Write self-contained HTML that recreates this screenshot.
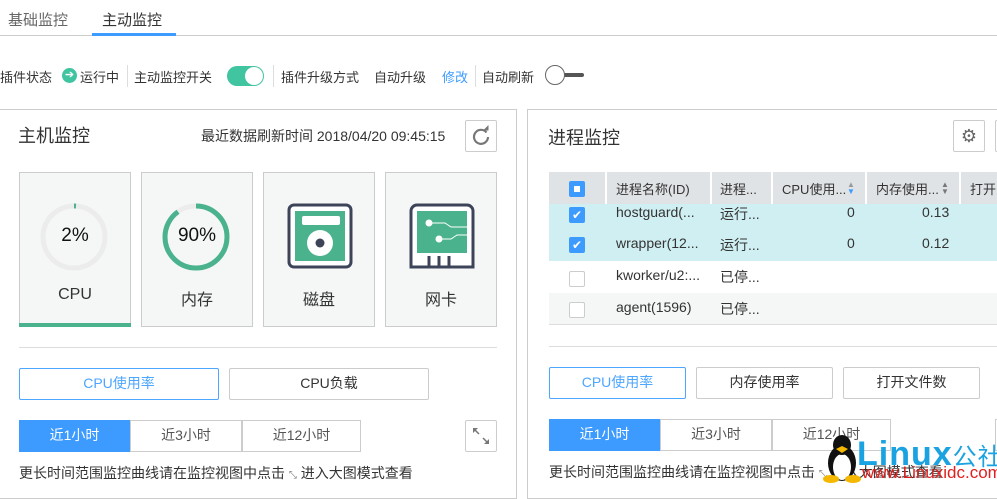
<!DOCTYPE html>
<html><head><meta charset="utf-8"><style>
*{box-sizing:border-box;margin:0;padding:0}
body{width:997px;height:483px;overflow:hidden;background:#fff;font-family:"Liberation Sans","Noto Sans CJK SC",sans-serif;color:#333;font-size:14px;position:relative}
.a{position:absolute;white-space:nowrap}
.card{position:absolute;top:172px;width:112px;height:155px;background:#f5f7f7;border:1px solid #ccc}
.card .l{position:absolute;width:100%;text-align:center;top:113px;font-size:16px;color:#333}
.btn{position:absolute;border:1px solid #ccc;border-radius:2px;text-align:center;line-height:29px;font-size:14px;color:#333;background:#fff}
.btn.sel{border-color:#4da6ff;color:#4da6ff}
.tt{position:absolute;border:1px solid #ccc;text-align:center;line-height:29px;font-size:14px;color:#555;background:#fff}
.tt.on{background:#3d9bff;border-color:#3d9bff;color:#fff}
.cb{position:absolute;left:20px;width:16px;height:16px;border:1px solid #ccc;border-radius:2px;background:#fff}
.cb.on{background:#3d9bff;border-color:#3d9bff}
.row{position:absolute;left:549px;width:448px;height:32px;font-size:14px;color:#333}
.row span{position:absolute;top:6px}
</style></head><body>
<div class="a" style="left:8px;top:9px;font-size:15px;color:#666">基础监控</div>
<div class="a" style="left:102px;top:9px;font-size:15px;color:#333">主动监控</div>
<div class="a" style="left:0;top:35px;width:997px;height:1px;background:#ccc"></div>
<div class="a" style="left:92px;top:33px;width:84px;height:3px;background:#3d9bff"></div>

<div class="a" style="left:0;top:67px;font-size:13px">插件状态</div>
<div class="a" style="left:62px;top:68px;width:15px;height:15px;border-radius:50%;background:#41c4a0;color:#fff;font-size:11px;line-height:15px;text-align:center">➔</div>
<div class="a" style="left:80px;top:67px;font-size:13px">运行中</div>
<div class="a" style="left:127px;top:65px;width:1px;height:22px;background:#ddd"></div>
<div class="a" style="left:134px;top:67px;font-size:13px">主动监控开关</div>
<div class="a" style="left:227px;top:66px;width:37px;height:20px;border-radius:10px;background:#41c4a0"></div>
<div class="a" style="left:245px;top:67px;width:18px;height:18px;border-radius:50%;background:#fff"></div>
<div class="a" style="left:273px;top:65px;width:1px;height:22px;background:#ddd"></div>
<div class="a" style="left:281px;top:67px;font-size:13px">插件升级方式</div>
<div class="a" style="left:374px;top:67px;font-size:13px">自动升级</div>
<div class="a" style="left:442px;top:67px;font-size:13px;color:#3d9bff">修改</div>
<div class="a" style="left:475px;top:65px;width:1px;height:22px;background:#ddd"></div>
<div class="a" style="left:482px;top:67px;font-size:13px">自动刷新</div>
<div class="a" style="left:560px;top:73px;width:24px;height:4px;background:#555;border-radius:2px"></div>
<div class="a" style="left:545px;top:65px;width:20px;height:20px;border-radius:50%;border:1.5px solid #666;background:#fff"></div>

<!-- left panel -->
<div class="a" style="left:-2px;top:109px;width:519px;height:390px;border:1px solid #ccc"></div>
<div class="a" style="left:18px;top:122px;font-size:18px;color:#333">主机监控</div>
<div class="a" style="left:201px;top:126px;font-size:14px;color:#333">最近数据刷新时间 2018/04/20 09:45:15</div>
<div class="a" style="left:465px;top:120px;width:32px;height:32px;border:1px solid #ccc;border-radius:2px"><svg width="30" height="30" viewBox="0 0 30 30"><path d="M20.5 11.5A7 7 0 1 0 22 16" fill="none" stroke="#777" stroke-width="2.2"/><path d="M17 9.5h5.5V4z" fill="#777"/></svg></div>

<div class="card" style="left:19px"><svg class="a" style="left:19px;top:29px" width="70" height="70" viewBox="0 0 70 70"><circle cx="35" cy="35" r="31" fill="none" stroke="#ececec" stroke-width="5"/><path d="M35 4 A31 31 0 0 1 37 4.06" fill="none" stroke="#4ab38e" stroke-width="5"/></svg><div class="a" style="left:0;width:110px;text-align:center;top:52px;font-size:19px;color:#111">2%</div><div class="l">CPU</div><div class="a" style="left:-1px;bottom:-1px;width:112px;height:4px;background:#4ab38e"></div></div>
<div class="card" style="left:141px"><svg class="a" style="left:19px;top:29px" width="70" height="70" viewBox="0 0 70 70"><circle cx="35" cy="35" r="31" fill="none" stroke="#ececec" stroke-width="5"/><circle cx="35" cy="35" r="31" fill="none" stroke="#4ab38e" stroke-width="5" stroke-dasharray="175.3 194.8" transform="rotate(-90 35 35)"/></svg><div class="a" style="left:0;width:110px;text-align:center;top:52px;font-size:19px;color:#111">90%</div><div class="l">内存</div></div>
<div class="card" style="left:263px"><svg class="a" style="left:23px;top:30px" width="66" height="66" viewBox="0 0 66 66"><rect x="2" y="2" width="62" height="62" rx="5" fill="#fff" stroke="#3d4459" stroke-width="3"/><rect x="8" y="8" width="50" height="50" fill="#4ab38e"/><rect x="15" y="13" width="38" height="9" rx="2" fill="#fff"/><circle cx="33" cy="40" r="13" fill="#fff"/><circle cx="33" cy="40" r="4.5" fill="#3d4459"/></svg><div class="l">磁盘</div></div>
<div class="card" style="left:385px"><svg class="a" style="left:23px;top:30px" width="66" height="66" viewBox="0 0 66 66"><path d="M2 64V8a6 6 0 0 1 6-6h50a6 6 0 0 1 6 6v56z" fill="#fff" stroke="#3d4459" stroke-width="3"/><rect x="8" y="8" width="50" height="42" fill="#4ab38e"/><path d="M20 53v11M30 53v11M40 53v11" stroke="#3d4459" stroke-width="3"/><circle cx="20" cy="20" r="3.5" fill="#fff"/><circle cx="30" cy="36" r="3.5" fill="#fff"/><path d="M20 20h16l6 4h16M30 36h12l6-4h10" fill="none" stroke="#fff" stroke-width="1"/></svg><div class="l">网卡</div></div>

<div class="a" style="left:19px;top:347px;width:478px;height:1px;background:#ddd"></div>
<div class="btn sel" style="left:19px;top:368px;width:200px;height:32px">CPU使用率</div>
<div class="btn" style="left:229px;top:368px;width:200px;height:32px">CPU负载</div>
<div class="tt on" style="left:19px;top:420px;width:111px;height:32px">近1小时</div>
<div class="tt" style="left:130px;top:420px;width:112px;height:32px">近3小时</div>
<div class="tt" style="left:242px;top:420px;width:119px;height:32px">近12小时</div>
<div class="a" style="left:465px;top:420px;width:32px;height:32px;border:1px solid #ccc;border-radius:2px"><svg width="30" height="30" viewBox="0 0 30 30"><path d="M8 8l5 5M22 22l-5-5" stroke="#777" stroke-width="1.5"/><path d="M7 7h5l-5 5zM23 23h-5l5-5z" fill="#777"/></svg></div>
<div class="a" style="left:19px;top:463px;font-size:14px;color:#333">更长时间范围监控曲线请在监控视图中点击 <span style="font-size:10px;color:#777">⤡</span> 进入大图模式查看</div>

<!-- right panel -->
<div class="a" style="left:527px;top:109px;width:480px;height:390px;border:1px solid #ccc"></div>
<div class="a" style="left:548px;top:124px;font-size:18px;color:#333">进程监控</div>
<div class="a" style="left:953px;top:120px;width:32px;height:32px;border:1px solid #ccc;border-radius:2px;text-align:center;line-height:30px;font-size:18px;color:#666">⚙</div>
<div class="a" style="left:995px;top:120px;width:10px;height:32px;border:1px solid #ccc;border-radius:2px"></div>

<div class="row" style="top:204px;height:25px;background:#d0eff2"><div class="cb on" style="top:3px;color:#fff;font-size:12px;line-height:14px;text-align:center">✔</div><span style="left:67px;top:0">hostguard(...</span><span style="left:171px;top:0">运行...</span><span style="left:298px;top:0">0</span><span style="left:373px;top:0">0.13</span></div>
<div class="row" style="top:229px;background:#d0eff2"><div class="cb on" style="top:8px;color:#fff;font-size:12px;line-height:14px;text-align:center">✔</div><span style="left:67px">wrapper(12...</span><span style="left:171px">运行...</span><span style="left:298px">0</span><span style="left:373px">0.12</span></div>
<div class="row" style="top:261px;background:#fff"><div class="cb" style="top:10px"></div><span style="left:67px">kworker/u2:...</span><span style="left:171px">已停...</span></div>
<div class="row" style="top:293px;background:#f5f7f7;border-bottom:1px solid #ddd"><div class="cb" style="top:9px"></div><span style="left:67px">agent(1596)</span><span style="left:171px">已停...</span></div>

<div class="a" style="left:549px;top:172px;width:448px;height:32px;background:#e0e3e5;font-size:13px;color:#333">
<div class="cb on" style="top:9px"><div class="a" style="left:4px;top:4px;width:6px;height:6px;background:#fff"></div></div>
<div class="a" style="left:56px;top:0;width:2px;height:32px;background:#fff"></div>
<span class="a" style="left:67px;top:7px">进程名称(ID)</span>
<div class="a" style="left:161px;top:0;width:2px;height:32px;background:#fff"></div>
<span class="a" style="left:171px;top:7px">进程...</span>
<div class="a" style="left:222px;top:0;width:2px;height:32px;background:#fff"></div>
<span class="a" style="left:233px;top:7px">CPU使用...</span><span class="a" style="left:298px;top:9px;font-size:8px;line-height:7px;color:#999">▲<br><span style="color:#3d9bff">▼</span></span>
<div class="a" style="left:316px;top:0;width:2px;height:32px;background:#fff"></div>
<span class="a" style="left:327px;top:7px">内存使用...</span><span class="a" style="left:392px;top:9px;font-size:8px;line-height:7px;color:#777">▲<br>▼</span>
<div class="a" style="left:410px;top:0;width:2px;height:32px;background:#fff"></div>
<span class="a" style="left:421px;top:7px">打开</span>
</div>

<div class="a" style="left:549px;top:346px;width:448px;height:1px;background:#ddd"></div>
<div class="btn sel" style="left:549px;top:367px;width:137px;height:32px">CPU使用率</div>
<div class="btn" style="left:696px;top:367px;width:137px;height:32px">内存使用率</div>
<div class="btn" style="left:843px;top:367px;width:137px;height:32px">打开文件数</div>
<div class="tt on" style="left:549px;top:419px;width:111px;height:32px">近1小时</div>
<div class="tt" style="left:660px;top:419px;width:112px;height:32px">近3小时</div>
<div class="tt" style="left:772px;top:419px;width:119px;height:32px">近12小时</div>
<div class="a" style="left:995px;top:419px;width:10px;height:32px;border:1px solid #ccc"></div>
<div class="a" style="left:549px;top:462px;font-size:14px;color:#333">更长时间范围监控曲线请在监控视图中点击 <span style="font-size:10px;color:#777">⤡</span> 进入大图模式查看</div>

<!-- watermark -->
<svg class="a" style="left:822px;top:433px" width="40" height="50" viewBox="0 0 40 50"><ellipse cx="20" cy="30" rx="14" ry="18" fill="#111"/><ellipse cx="20" cy="34" rx="9" ry="13" fill="#fff"/><ellipse cx="20" cy="12" rx="9" ry="10" fill="#111"/><path d="M14 16l6-3 6 3-6 4z" fill="#f5b800"/><ellipse cx="9" cy="46" rx="8" ry="4" fill="#f5b800"/><ellipse cx="31" cy="46" rx="8" ry="4" fill="#f5b800"/></svg>
<div class="a" style="left:857px;top:437px;font-size:34px;font-weight:bold;color:#1aa3e0;line-height:34px;letter-spacing:1px">Linux<span style="font-size:24px;font-weight:normal">公社</span></div>
<div class="a" style="left:862px;top:464px;font-size:17px;color:#e0201e;line-height:18px">www.Linuxidc.com</div>
</body></html>
